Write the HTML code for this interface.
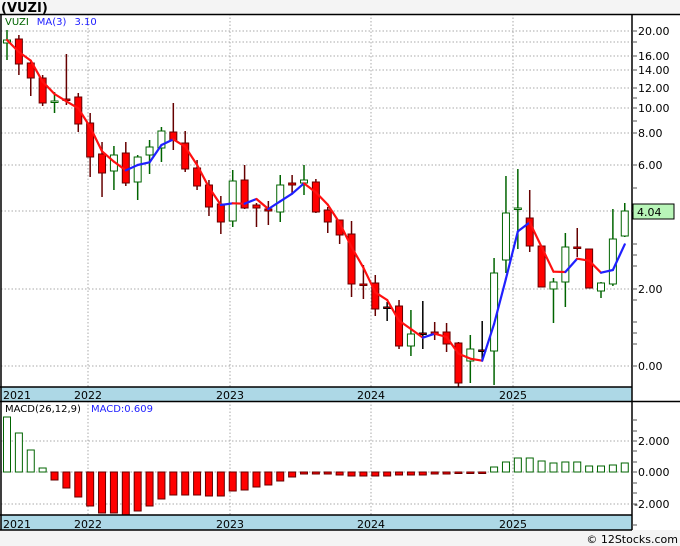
<!DOCTYPE html>
<html><head><meta charset="utf-8"><style>
html,body{margin:0;padding:0;background:#f4f4f4;}
svg{display:block;font-family:"DejaVu Sans","Liberation Sans",sans-serif;}
</style></head><body>
<svg id="s" width="680" height="546" viewBox="0 0 680 546" xmlns="http://www.w3.org/2000/svg">
<rect x="0" y="0" width="680" height="546" fill="#f4f4f4"/>
<text x="1" y="12" font-size="13" font-weight="bold" fill="#000">(VUZI)</text>
<rect x="1" y="14" width="679" height="387" fill="#fff"/>
<rect x="1" y="401" width="679" height="129" fill="#fff"/>
<g stroke="#aaa" stroke-dasharray="1.5,2" stroke-width="1" id="grid">
<line x1="1" x2="632" y1="31" y2="31"/><line x1="1" x2="632" y1="42" y2="42"/><line x1="1" x2="632" y1="56" y2="56"/><line x1="1" x2="632" y1="70" y2="70"/><line x1="1" x2="632" y1="88" y2="88"/><line x1="1" x2="632" y1="108" y2="108"/><line x1="1" x2="632" y1="133" y2="133"/><line x1="1" x2="632" y1="165" y2="165"/><line x1="1" x2="632" y1="211" y2="211"/><line x1="1" x2="632" y1="289" y2="289"/><line x1="1" x2="632" y1="366" y2="366"/>
<line x1="88" x2="88" y1="14" y2="387"/><line x1="230" x2="230" y1="14" y2="387"/><line x1="371" x2="371" y1="14" y2="387"/><line x1="513" x2="513" y1="14" y2="387"/>
<line x1="1" x2="632" y1="441" y2="441"/><line x1="1" x2="632" y1="472" y2="472"/><line x1="1" x2="632" y1="504" y2="504"/>
<line x1="88" x2="88" y1="401" y2="515"/><line x1="230" x2="230" y1="401" y2="515"/><line x1="371" x2="371" y1="401" y2="515"/><line x1="513" x2="513" y1="401" y2="515"/>
</g>
<g id="cd"></g>
<g id="md"></g>
<rect x="1" y="387" width="631" height="14" fill="#add8e6"/>
<rect x="1" y="515" width="631" height="15" fill="#add8e6"/>
<g stroke="#000" stroke-width="1.5" fill="none">
<line x1="0" x2="680" y1="14.5" y2="14.5"/>
<line x1="0" x2="632" y1="387" y2="387"/>
<line x1="0" x2="680" y1="401.5" y2="401.5"/>
<line x1="0" x2="632" y1="515" y2="515"/>
<line x1="0" x2="632" y1="530" y2="530"/>
<line x1="1" x2="1" y1="14" y2="530"/>
<line x1="632" x2="632" y1="14" y2="530"/>
</g>
<g font-size="11" fill="#000">
<text x="3" y="399">2021</text><text x="74" y="399">2022</text><text x="216" y="399">2023</text><text x="357" y="399">2024</text><text x="499" y="399">2025</text>
<text x="3" y="528">2021</text><text x="74" y="528">2022</text><text x="216" y="528">2023</text><text x="357" y="528">2024</text><text x="499" y="528">2025</text>
</g>
<g font-size="11" fill="#000" stroke="none">
<text x="638" y="35">20.00</text><text x="638" y="60">16.00</text><text x="638" y="74">14.00</text><text x="638" y="92">12.00</text><text x="638" y="112">10.00</text><text x="638" y="137">8.00</text><text x="638" y="169">6.00</text><text x="638" y="215">4.00</text><text x="638" y="293">2.00</text><text x="638" y="370">0.00</text>
<text x="638" y="445">2.000</text><text x="638" y="476">0.000</text><text x="634" y="508">-2.000</text>
</g>
<g stroke="#555" stroke-width="1">
<line x1="632" x2="637" y1="31" y2="31"/><line x1="632" x2="637" y1="42" y2="42"/><line x1="632" x2="637" y1="56" y2="56"/><line x1="632" x2="637" y1="70" y2="70"/><line x1="632" x2="637" y1="88" y2="88"/><line x1="632" x2="637" y1="98" y2="98"/><line x1="632" x2="637" y1="108" y2="108"/><line x1="632" x2="637" y1="121" y2="121"/><line x1="632" x2="637" y1="133" y2="133"/><line x1="632" x2="637" y1="165" y2="165"/><line x1="632" x2="637" y1="188" y2="188"/><line x1="632" x2="637" y1="211" y2="211"/><line x1="632" x2="637" y1="244" y2="244"/><line x1="632" x2="637" y1="255" y2="255"/><line x1="632" x2="637" y1="266" y2="266"/><line x1="632" x2="637" y1="289" y2="289"/><line x1="632" x2="637" y1="300" y2="300"/><line x1="632" x2="637" y1="322" y2="322"/><line x1="632" x2="637" y1="333" y2="333"/><line x1="632" x2="637" y1="344" y2="344"/><line x1="632" x2="637" y1="366" y2="366"/>
<line x1="632" x2="637" y1="420" y2="420"/><line x1="632" x2="637" y1="431" y2="431"/><line x1="632" x2="637" y1="441" y2="441"/><line x1="632" x2="637" y1="451" y2="451"/><line x1="632" x2="637" y1="462" y2="462"/><line x1="632" x2="637" y1="472" y2="472"/><line x1="632" x2="637" y1="483" y2="483"/><line x1="632" x2="637" y1="493" y2="493"/><line x1="632" x2="637" y1="504" y2="504"/><line x1="632" x2="637" y1="525" y2="525"/>
</g>
<rect x="633" y="204" width="41" height="15" fill="#b8f5b8" stroke="#000" stroke-width="1"/>
<text x="637" y="216" font-size="11" fill="#000">4.04</text>
<text x="5" y="25" font-size="10"><tspan fill="#006400">VUZI</tspan><tspan fill="#2020ff" dx="8">MA(3)</tspan><tspan fill="#2020ff" dx="8">3.10</tspan></text>
<text x="5" y="412" font-size="10"><tspan fill="#000">MACD(26,12,9)</tspan><tspan fill="#2020ff" dx="10">MACD:0.609</tspan></text>
<text x="678" y="543" font-size="11" fill="#000" text-anchor="end">© 12Stocks.com</text>
</svg>
<script>
var C=[[43,40,30,60],[39,64,35,75],[63,78,60,96],[78,103,75,106],[102,101,92,113],[99,100,54,105],[97,124,93,132],[123,157,113,177],[154,173,142,197],[171,155,146,190],[153,183,142,186],[182,157,155,200],[155,147,140,174],[148,131,127,162],[132,140,103,150],[143,169,131,172],[168,186,160,190],[185,207,180,216],[204,222,196,234],[221,181,170,227],[180,208,165,209],[205,208,203,227],[209,211,201,225],[212,185,175,222],[183,185,175,193],[183,180,165,195],[182,212,179,213],[210,222,207,233],[220,235,220,244],[234,284,221,297],[284,284,265,299],[283,309,275,316],[307,307,302,321],[306,346,300,349],[346,334,310,356],[333,333,301,349],[332,334,322,340],[332,344,323,352],[343,383,342,387],[361,349,335,383],[350,350,321,360],[351,273,258,385],[260,213,176,273],[209,208,169,249],[218,246,190,252],[246,287,246,287],[289,282,278,323],[282,247,233,307],[247,247,228,257],[249,288,249,288],[291,283,282,298],[284,239,209,286],[236,211,203,237]];
var ns="http://www.w3.org/2000/svg",cd=document.getElementById('cd'),md=document.getElementById('md');
function el(p,t,a){var e=document.createElementNS(ns,t);for(var k in a)e.setAttribute(k,a[k]);p.appendChild(e);return e;}
var X=function(i){return 7+11.88*i;};
var cl=[];
C.forEach(function(c,i){var x=X(i),o=c[0],cc=c[1],up=cc<o;
var col=up?'#006400':'#600';
if(c[0]==c[1]&&(i==32||i==35||i==40))col='#000';
el(cd,'line',{x1:x,x2:x,y1:c[2],y2:c[3],stroke:col,'stroke-width':1.5});
var t=Math.min(o,cc),h=Math.max(Math.abs(cc-o),1.5);
el(cd,'rect',{x:x-3.5,y:t,width:7,height:h,fill:up?'#fff':'#f00',stroke:col,'stroke-width':1});
cl.push(cc);});
var ma=cl.map(function(v,i){var s=cl.slice(Math.max(0,i-2),i+1);return s.reduce(function(a,b){return a+b;},0)/s.length;});
for(var i=1;i<ma.length;i++){el(cd,'line',{x1:X(i-1),x2:X(i),y1:ma[i-1],y2:ma[i],stroke:ma[i]<ma[i-1]?'#2020ff':'#ff1010','stroke-width':2.2,'stroke-linecap':'round'});}
var M=[417,433,450,468,480,488,497,506,513,513,515,511,506,499,495,495,495,496,496,491,490,487,485,481,477,474,474,474,475,476,476,476,476,475,475,475,474,474,473,473,472,467,462,458,458,461,463,462,462,466,466,465,463];
M.forEach(function(v,i){var x=X(i);var pos=v<472;var t=pos?v:472,h=Math.max(Math.abs(v-472),1.5);
el(md,'rect',{x:x-3.5,y:t,width:7,height:h,fill:pos?'#fff':'#f00',stroke:pos?'#006400':'#600','stroke-width':1});});
</script>
</body></html>
